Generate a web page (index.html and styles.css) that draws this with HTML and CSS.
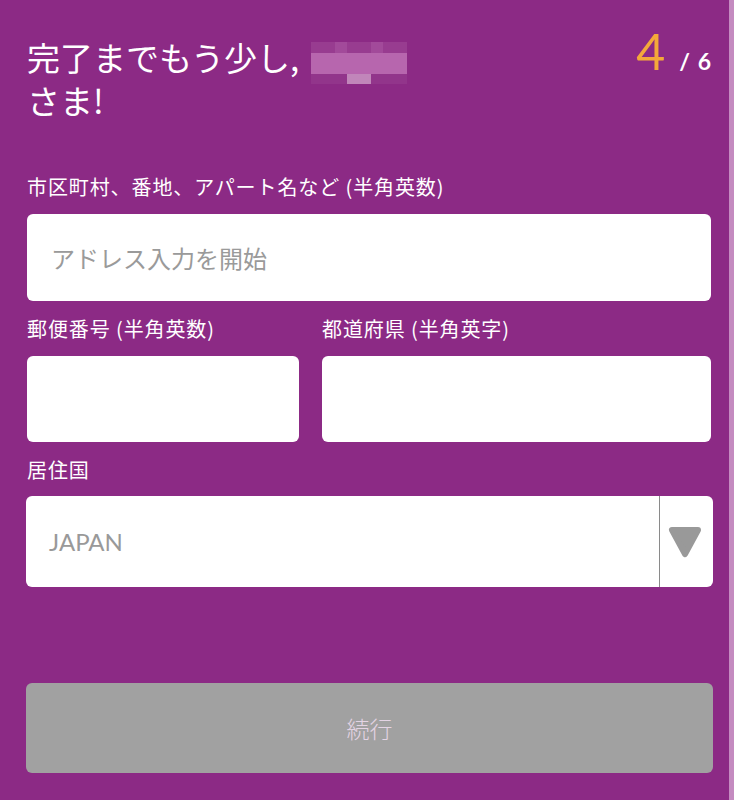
FILE: index.html
```html
<!DOCTYPE html>
<html lang="ja">
<head>
    <meta charset="UTF-8">
    <meta name="viewport" content="width=device-width, initial-scale=1.0">
    <title>住所入力</title>
    <link rel="stylesheet" href="styles.css">
</head>
<body>
    <div class="page">
        <div class="header">
            <h1 class="title">完了までもう少し,<span class="blur"><span class="blur-grid"><i></i><i></i><i></i><i></i><i></i><i></i><i></i><i></i><i></i><i></i><i></i><i></i><i></i><i></i><i></i><i></i><i></i><i></i><i></i><i></i><i></i><i></i><i></i><i></i><i></i><i></i><i></i><i></i><i></i><i></i><i></i><i></i></span></span><br>さま!</h1>
            <div class="step"><span class="step-now">4</span><span class="step-all">/ 6</span></div>
        </div>

        <form class="form" action="">
            <label class="label">市区町村、番地、アパート名など (半角英数)</label>
            <input class="field" type="text" placeholder="アドレス入力を開始">

            <div class="row">
                <div class="col zip">
                    <label class="label">郵便番号 (半角英数)</label>
                    <input class="field" type="text">
                </div>
                <div class="col pref">
                    <label class="label">都道府県 (半角英字)</label>
                    <input class="field" type="text">
                </div>
            </div>

            <label class="label">居住国</label>
            <div class="select">
                <div class="select-value">JAPAN</div>
                <div class="select-arrow">
                    <svg width="36" height="34" viewBox="0 0 36 34">
                        <polygon points="5,5 31,5 18,29" fill="#999" stroke="#999" stroke-width="6" stroke-linejoin="round"/>
                    </svg>
                </div>
            </div>

            <button type="button" class="next" disabled>続行</button>
        </form>
    </div>
</body>
</html>
```

FILE: styles.css
```css
* {
    box-sizing: border-box;
    margin: 0;
    padding: 0;
}
body {
    background-color: #8c2a85;
    font-family: "Noto Sans CJK JP", "Noto Sans", sans-serif;
    color: white;
}
.page {
    width: 734px;
    min-height: 800px;
    padding: 0 18px 0 27px;
    border-right: 5px solid #c48bc0;
}
.header {
    display: flex;
    justify-content: space-between;
    align-items: flex-start;
    padding-top: 36px;
}
.title {
    font-size: 33px;
    font-weight: normal;
    line-height: 43px;
}
/* ぼかした名前 */
.blur {
    display: inline-block;
    height: 43px;
    width: 96px;
    vertical-align: top;
    margin-left: 12px;
}
.blur-grid {
    display: grid;
    grid-template-columns: repeat(8, 12px);
    grid-template-rows: repeat(4, 10.5px);
    margin-top: 6px;
}
.blur i { background: #983c90; }
.blur i:nth-child(3n) { background: #a24a9a; }
.blur i:nth-child(n+9):nth-child(-n+24) { background: #b766ae; }
.blur i:nth-child(10),
.blur i:nth-child(12),
.blur i:nth-child(15),
.blur i:nth-child(18),
.blur i:nth-child(21),
.blur i:nth-child(23) { background: #d49ccd; }
.blur i:nth-child(n+25) { background: #92358b; }
.blur i:nth-child(28),
.blur i:nth-child(29) { background: #c186ba; }
.step {
    font-family: Lato, "Noto Sans", sans-serif;
    display: flex;
    align-items: baseline;
    gap: 14px;
    margin-top: -4px;
}
.step-now {
    font-size: 50px;
    color: #f4a83a;
    line-height: 38px;
}
.step-all {
    font-size: 23px;
    font-weight: bold;
    word-spacing: 2px;
}
.form {
    display: flex;
    flex-direction: column;
    padding-top: 52px;
}
.label {
    display: block;
    font-size: 20px;
    letter-spacing: 0.9px;
    line-height: 26px;
    margin-bottom: 14px;
}
.field {
    width: 100%;
    height: 87px;
    border: none;
    border-radius: 6px;
    background-color: white;
    font-family: "Noto Sans CJK JP", sans-serif;
    font-size: 24px;
    padding-left: 24px;
    margin-bottom: 15px;
    color: #333;
}
.field::placeholder {
    color: #9a9a9a;
}
.row {
    display: flex;
    gap: 23px;
}
.zip {
    width: 272px;
}
.pref {
    flex: 1;
}
.col .field {
    height: 86px;
}
.select {
    display: flex;
    height: 91px;
    margin: -1px -2px 0 -1px;
    background-color: white;
    border-radius: 6px;
}
.select-value {
    flex: 1;
    display: flex;
    align-items: center;
    padding-left: 23px;
    font-family: Lato, sans-serif;
    font-size: 24px;
    color: #999;
}
.select-arrow {
    width: 54px;
    border-left: 1px solid #8a8a8a;
    display: flex;
    align-items: center;
    justify-content: center;
    padding-right: 4px;
}
.next {
    margin: 96px -2px 0 -1px;
    height: 90px;
    border: none;
    border-radius: 6px;
    background-color: #a1a1a1;
    color: #e4d4e4;
    font-family: "Noto Sans CJK JP", sans-serif;
    font-size: 23px;
    font-weight: 300;
}
```
